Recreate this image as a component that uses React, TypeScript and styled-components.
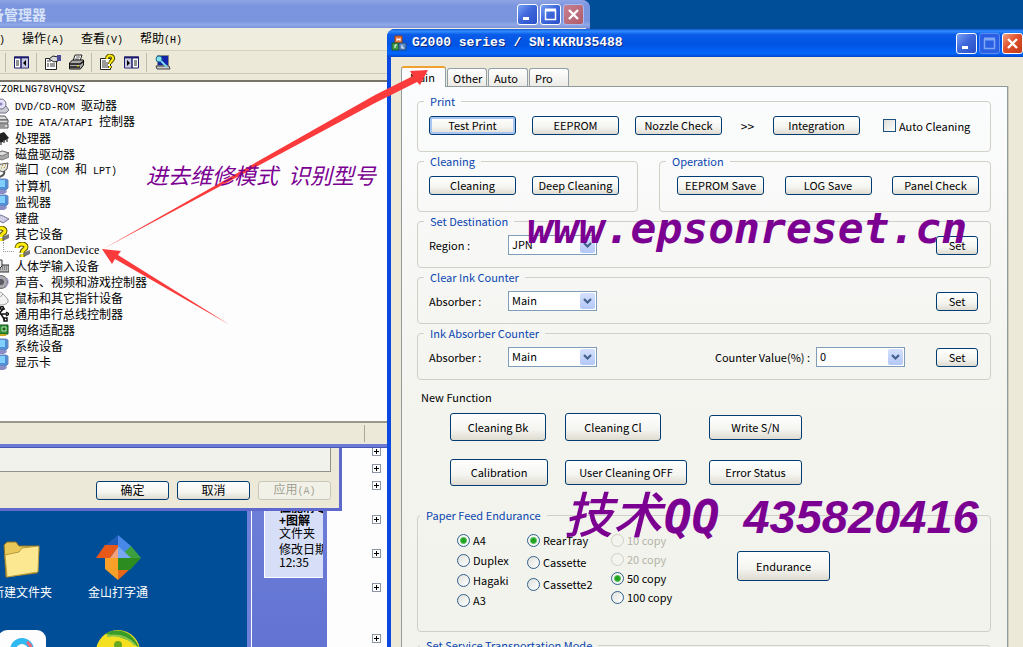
import React from "react";
import styled, { createGlobalStyle, css } from "styled-components";

const UI_FONT = '"Noto Sans CJK JP", "Noto Sans", sans-serif';
const SONG_FONT = '"Noto Sans CJK SC", "Liberation Sans", sans-serif';

const GlobalStyle = createGlobalStyle`
  * { box-sizing: border-box; }
  html, body { margin: 0; padding: 0; height: 100%; overflow: hidden; }
  #root { height: 100%; }
  body { font: 12px/14px ${SONG_FONT}; color: #000; }
  button, input, select { font: inherit; color: inherit; }
`;

/* ---------- desktop ---------- */

const Desktop = styled.main`
  position: relative;
  height: 100%;
  overflow: hidden;
  background: #004e98;
`;

const Shortcuts = styled.div`
  position: absolute;
  left: -26px;
  top: 535px;
  display: grid;
  grid-template-columns: 96px 96px;
  grid-auto-rows: 95px;
`;

const Shortcut = styled.a`
  display: flex;
  flex-direction: column;
  align-items: center;
  gap: 2px;
  color: #fff;
  text-decoration: none;
  white-space: nowrap;
  svg { display: block; }
`;

/* ---------- windows ---------- */

const Frame = styled.section`
  position: absolute;
  display: flex;
  flex-direction: column;
`;

const ManagerWindow = styled(Frame)`
  left: -60px;
  top: 0;
  width: 650px;
  height: 448px;
  padding: 0 4px 3px;
  background: #6a7ad6;
  border-bottom: 1px solid #4a56b4;
  border-radius: 0 8px 0 0;
`;

const ManagerBody = styled.div`
  display: flex;
  flex: 1;
  flex-direction: column;
  background: #ece9d8;
`;

const PropertiesWindow = styled(Frame)`
  left: -60px;
  top: 300px;
  width: 402px;
  height: 211px;
  border: 3px solid #5f68cc;
  background: #ece9d8;
`;

const ExplorerWindow = styled(Frame)`
  left: 247px;
  top: 300px;
  bottom: 0;
  width: 180px;
  flex-direction: row;
  background: #fdfdfd;
  border-left: 4px solid #6f80d8;
`;

const ToolWindow = styled(Frame)`
  left: 387px;
  right: -4px;
  top: 29px;
  padding: 0 4px 4px;
  background: #0a48e0;
  border-radius: 8px 0 0 0;
  font-family: ${UI_FONT};
  font-size: 11px;
`;

const TitleBar = styled.header<{ $active?: boolean }>`
  display: flex;
  align-items: center;
  gap: 2px;
  height: 28px;
  margin: 0 -4px;
  padding: 0 6px 0 4px;
  border-radius: inherit;
  color: #d6e2f8;
  background: linear-gradient(#8fa4e4, #7b95df 20%, #7a94de 75%, #8fa8e8 88%, #7e92da);
  ${(p) =>
    p.$active &&
    css`
      padding-right: 4px;
      color: #fff;
      background: linear-gradient(#1458d0, #2f8cff 8%, #0a5ce8 20%, #0054e3 55%, #0066fb 88%, #0344c8);
    `}
`;

const Title = styled.h1`
  flex: 1;
  margin: 0;
  font: bold 14px/16px ${SONG_FONT};
  white-space: nowrap;
`;

const ManagerTitle = styled(Title)`
  padding-left: 32px;
`;

const ToolTitle = styled(Title)`
  padding-left: 3px;
  font: bold 13px/16px "Liberation Mono", monospace;
  text-shadow: 1px 1px 0 #0a2a80;
`;

const CaptionButton = styled.button<{ $tone: "blue" | "dim" | "red" | "faded" }>`
  display: grid;
  place-items: center;
  width: 21px;
  height: 21px;
  padding: 0;
  border: 1px solid ${(p) => (p.$tone === "faded" ? "#a9bcf0" : "#fff")};
  border-radius: 3px;
  background: ${(p) =>
    p.$tone === "red"
      ? "linear-gradient(135deg, #f0a080, #e0502c 45%, #c03a18)"
      : p.$tone === "faded"
        ? "linear-gradient(135deg, #c88090, #b05a68)"
        : "linear-gradient(135deg, #7aa2f4, #3e68dc 45%, #2a50c8)"};
  ${(p) => p.$tone === "dim" && "border-color: #5c8cf0; background: #2a5fe4;"}
`;

type GlyphKind = "min" | "max" | "close";
const CaptionGlyph = ({ kind, color = "#fff" }: { kind: GlyphKind; color?: string }) => (
  <svg width="15" height="15" viewBox="0 0 15 15" fill="none" stroke={color}>
    {kind === "min" && <path d="M3 11.5h6" strokeWidth="3" />}
    {kind === "max" && <path d="M2.500 3v9.500h10V3M2 3h11" strokeWidth="1.500" />}
    {kind === "max" && <path d="M2 3h11" strokeWidth="3" />}
    {kind === "close" && <path d="M3 3l9 9M12 3l-9 9" strokeWidth="2.400" />}
  </svg>
);

/* ---------- mixed-script text ---------- */

const HalfWidth = styled.span`
  font-family: "Liberation Mono", monospace;
  font-size: 10px;
  white-space: pre;
`;

const Mixed = ({ children }: { children: string }) => (
  <>
    {children.split(/([\x20-\x7e]+)/).map((part, i) =>
      i % 2 ? <HalfWidth key={i}>{part}</HalfWidth> : part
    )}
  </>
);

/* ---------- device manager ---------- */

const MenuBar = styled.nav`
  display: flex;
  align-items: center;
  gap: 17px;
  height: 23px;
  padding-left: 19px;
  background: #efedde;
  border-bottom: 1px solid #d5d2c2;
`;

const MenuItem = styled.button`
  padding: 0;
  border: 0;
  background: none;
  white-space: nowrap;
`;

const ToolBar = styled.div`
  display: flex;
  align-items: center;
  height: 23px;
  padding-left: 61px;
  border-bottom: 1px solid #cdcaba;
`;

const ToolGroup = styled.div`
  display: flex;
  gap: 7px;
  padding: 1px 6px 1px 7px;
  border-left: 1px solid #c0bdae;
`;

const ToolButton = styled.button`
  width: 17px;
  height: 17px;
  padding: 0;
  border: 0;
  background: none;
  svg { display: block; }
`;

const TreePane = styled.div`
  flex: 1;
  margin-top: 6px;
  background: #fdfdfd;
  border-top: 2px solid #77756a;
  border-bottom: 2px solid #9a988c;
`;

const Tree = styled.ul`
  margin: 0;
  padding: 0;
  list-style: none;
`;

const TreeItem = styled.li<{ $level: number }>`
  display: flex;
  align-items: center;
  gap: 6px;
  height: 16px;
  padding-left: ${(p) => [51, 49, 59][p.$level]}px;
  white-space: nowrap;
  ${(p) =>
    p.$level === 2 &&
    css`
      gap: 4px;
      &::before {
        content: "";
        align-self: flex-start;
        width: 10px;
        height: 9px;
        margin-right: -4px;
        border: dotted #9a9a9a;
        border-width: 0 0 1px 1px;
      }
    `}
`;

const DeviceName = styled.span`
  font-family: "Liberation Serif", serif;
`;

const StatusBar = styled.footer`
  display: flex;
  height: 21px;
  padding: 2px 0;
`;

const StatusCell = styled.div`
  width: 421px;
  border-right: 1px solid #aaa798;
`;

type Device = "disc" | "ide" | "chip" | "disk" | "port" | "pc" | "keys" | "unknown" | "hid" | "sound" | "mouse" | "usb" | "net";

const DeviceIcon = ({ kind }: { kind: Device }) => (
  <svg width="16" height="16" viewBox="0 0 16 16">
    {kind === "disc" && (
      <g stroke="#73738c">
        <path d="M5 9l8-1 3 4-3 3H6z" fill="#c9c9d2" />
        <circle cx="8" cy="6" r="5" fill="#e4e2f4" />
        <circle cx="8" cy="6" r="1.500" fill="#8c84c8" stroke="none" />
      </g>
    )}
    {kind === "ide" && (
      <g stroke="#555" fill="#dcdcdc">
        <path d="M4 2h8l3 4H6z" />
        <path d="M4 6h11v3H4zM4 10h11v4H4z" />
        <path d="M6 12h6" />
      </g>
    )}
    {kind === "chip" && (
      <g>
        <path d="M3 5l8-3 5 6-8 5z" fill="#222" />
        <path d="M5 12v3M8 12v3M11 10v3M14 9v3M4 3v2" stroke="#555" strokeWidth="1.500" />
      </g>
    )}
    {kind === "disk" && (
      <g stroke="#777">
        <path d="M2 8l7-3 7 2v4l-7 3-7-3z" fill="#aaa" />
        <path d="M2 8l7-3 7 2-7 3z" fill="#ddd" />
      </g>
    )}
    {kind === "port" && (
      <g stroke="#555">
        <path d="M3 3l12-2-1 6-4 3-5-2z" fill="#e6e6dc" />
        <path d="M11 9c1 3-1 5-5 6" fill="none" strokeWidth="2" />
        <path d="M6 4h1M9 3.500h1M12 3h1M8 6h1M11 5.500h1" stroke="#b09420" />
      </g>
    )}
    {kind === "pc" && (
      <g>
        <path d="M5 1h8l2 1v8l-2 2H5z" fill="#4f8fd8" stroke="#6d86b8" />
        <path d="M6 2h6v7H6z" fill="#7fd0ff" />
        <path d="M7 12h6l1 2-3 2H6z" fill="#8c8cc4" />
      </g>
    )}
    {kind === "keys" && (
      <g>
        <path d="M1 8l7-3 8 4-6 4z" fill="#c4c2dc" stroke="#77759c" />
        <path d="M5 8l6 3M8 7l5 2" stroke="#fff" strokeDasharray="1 1" />
      </g>
    )}
    {kind === "unknown" && (
      <g fill="none">
        <path d="M9 11l7-3v4l-6 3z" fill="#777" />
        <path d="M3 6c0-5 9-5 9-1 0 3-4 2-4 6M8 12.500V15" stroke="#5e5a00" strokeWidth="5" />
        <path d="M3 6c0-5 9-5 9-1 0 3-4 2-4 6M8 12.500V15" stroke="#ffec10" strokeWidth="3" />
      </g>
    )}
    {kind === "hid" && (
      <g stroke="#333">
        <path d="M5 7h11v7H5z" fill="#b8b8b8" />
        <path d="M7 9h8M7 11h8" stroke="#555" strokeDasharray="1 1" />
        <path d="M2 2h7v6l-3 3H2z" fill="#eee" />
      </g>
    )}
    {kind === "sound" && (
      <g>
        <circle cx="8" cy="8" r="6.500" fill="#a8a8ae" stroke="#666" />
        <circle cx="8" cy="8" r="3" fill="#5c5c64" />
        <path d="M14 4c2 3 2 6-2 10" fill="none" stroke="#aaa4e0" />
      </g>
    )}
    {kind === "mouse" && (
      <g stroke="#999">
        <path d="M5 1c2 0 9 6 10 9s-3 5-7 5-5-4-5-6 0-8 2-8z" fill="#f2f2f2" />
        <path d="M3 8c4-1 6-2 7-4" fill="none" />
      </g>
    )}
    {kind === "usb" && (
      <g fill="none" stroke="#111" strokeWidth="1.500">
        <path d="M2 8h12M6 8l4-5h2M8 8l3 5h1M13 6l3 2-3 2" />
        <circle cx="9" cy="2" r="1.500" />
        <path d="M11 12h3v3h-3z" />
      </g>
    )}
    {kind === "net" && (
      <g>
        <path d="M2 3h13v9H2z" fill="#2f8f38" stroke="#145018" />
        <path d="M9 5h4v4H9z" stroke="#b6ecb0" fill="#1c5c20" />
        <path d="M5 13h8" stroke="#c8a820" strokeWidth="2" />
      </g>
    )}
  </svg>
);

const devices: { kind: Device; name: string; child?: boolean }[] = [
  { kind: "disc", name: "DVD/CD-ROM 驱动器" },
  { kind: "ide", name: "IDE ATA/ATAPI 控制器" },
  { kind: "chip", name: "处理器" },
  { kind: "disk", name: "磁盘驱动器" },
  { kind: "port", name: "端口 (COM 和 LPT)" },
  { kind: "pc", name: "计算机" },
  { kind: "pc", name: "监视器" },
  { kind: "keys", name: "键盘" },
  { kind: "unknown", name: "其它设备" },
  { kind: "unknown", name: "CanonDevice", child: true },
  { kind: "hid", name: "人体学输入设备" },
  { kind: "sound", name: "声音、视频和游戏控制器" },
  { kind: "mouse", name: "鼠标和其它指针设备" },
  { kind: "usb", name: "通用串行总线控制器" },
  { kind: "net", name: "网络适配器" },
  { kind: "pc", name: "系统设备" },
  { kind: "pc", name: "显示卡" },
];

const PaneIcon = ({ flip }: { flip?: boolean }) => (
  <svg width="17" height="17" viewBox="0 0 17 17">
    <g transform={flip ? "matrix(-1 0 0 1 17 0)" : undefined}>
      <path d="M1.500 3h14v11h-14z" fill="#fff" stroke="#1c1c6c" />
      <path d="M1 3.500h15" stroke="#1c1c6c" strokeWidth="2" />
      <path d="M8 5h7v8H8z" fill="#c8c8e0" />
      <path d="M8 4v10" stroke="#1c1c6c" strokeWidth="1.500" />
      <path d="M3 7h3M3 9h3M3 11h3" stroke="#222" />
      <path d="M13 6v6l-3-3z" fill="#000" />
    </g>
  </svg>
);

const SheetIcon = () => (
  <svg width="17" height="17" viewBox="0 0 17 17">
    <path d="M1.500 4.500h11v11h-11z" fill="#fff" stroke="#222" />
    <path d="M3 10h2M6 10h5M3 12h2M6 12h5M3 7h4" stroke="#333" />
    <path d="M5 5l4-3 5 1v4l-4 1z" fill="#d8d8d8" stroke="#222" />
    <path d="M13 1h4v6h-4z" fill="#4a4a98" />
  </svg>
);

const PrinterIcon = () => (
  <svg width="17" height="17" viewBox="0 0 17 17">
    <path d="M5 7l2-6h7l-2 6z" fill="#fff" stroke="#222" />
    <path d="M8 3h4M7 5h4" stroke="#666" />
    <path d="M1.500 9l3-3h11v5l-3 4h-11z" fill="#aaa" stroke="#111" />
    <path d="M1 10h11l4-3M2 13h10" stroke="#111" fill="none" strokeWidth="1.500" />
    <path d="M9 12h2" stroke="#e8d820" />
  </svg>
);

const HelpSheetIcon = () => (
  <svg width="17" height="17" viewBox="0 0 17 17">
    <path d="M1.500 4.500h10v11h-10z" fill="#fff" stroke="#222" />
    <path d="M3 7h4M3 9h6M3 11h6M3 13h6" stroke="#333" />
    <path d="M8 5c0-5 7-4 6 0-1 2-3 2-3 5M11 12v2" fill="none" stroke="#5a5600" strokeWidth="4" />
    <path d="M8 5c0-5 7-4 6 0-1 2-3 2-3 5M11 12v2" fill="none" stroke="#ffec10" strokeWidth="2" />
  </svg>
);

const ScanIcon = () => (
  <svg width="17" height="17" viewBox="0 0 17 17">
    <path d="M3.500 1.500h11v10h-11z" fill="#1424a8" stroke="#888" />
    <path d="M2 12h13l1 3H3z" fill="#c8c8c8" stroke="#444" />
    <circle cx="5" cy="5" r="3" fill="#88e0f0" stroke="#1a6a8a" />
    <path d="M7 7l6 6" stroke="#7adcf0" strokeWidth="2" />
  </svg>
);

/* ---------- property sheet ---------- */

const SheetBody = styled.div`
  flex: 1;
  margin-right: 8px;
  background: #f2f2ec;
  border: solid #91918a;
  border-width: 0 1px 1px 0;
`;

const SheetButtons = styled.div`
  display: flex;
  justify-content: flex-end;
  gap: 8px;
  padding: 9px 8px 8px;
`;

/* ---------- explorer ---------- */

const TaskPane = styled.aside`
  width: 76px;
  padding: 0 4px 0 12px;
  background: linear-gradient(#7a8ee0, #6273d2);
  border-left: 1px solid #fff;
`;

const DetailCard = styled.div`
  display: flex;
  flex-direction: column;
  justify-content: flex-end;
  height: 278px;
  padding: 0 0 9px 14px;
  overflow: hidden;
  white-space: nowrap;
  background: #d6dff7;
  border: solid #fff;
  border-width: 0 0 1px 1px;
`;

const DetailLine = styled.p<{ $bold?: boolean; $spaced?: boolean }>`
  margin: ${(p) => (p.$spaced ? "3px 0 0" : "0")};
  font-weight: ${(p) => (p.$bold ? "bold" : "normal")};
  line-height: 13px;
`;

const FolderTree = styled.div`
  display: flex;
  flex: 1;
  flex-direction: column;
  padding: 143px 0 0 45px;
`;

const ExpandRow = styled.div<{ $span: number }>`
  flex: none;
  display: flex;
  align-items: flex-start;
  height: ${(p) => p.$span * 17}px;
  padding-top: 4px;
`;

const Expander = styled.button`
  width: 9px;
  height: 9px;
  padding: 0;
  border: 1px solid #8a96a4;
  background: #fff linear-gradient(#000, #000) center / 5px 1px no-repeat;
  &::before {
    content: "";
    display: block;
    width: 1px;
    height: 5px;
    margin: 0 auto;
    background: #000;
  }
`;

/* ---------- controls ---------- */

const Button = styled.button<{ $w?: number; $h?: number; $focus?: boolean }>`
  flex: none;
  width: ${(p) => p.$w ?? 87}px;
  height: ${(p) => p.$h ?? 19}px;
  padding: 0 0 1px;
  border: 1px solid #003c74;
  border-radius: 3px;
  background: linear-gradient(#fff, #f4f4f0 60%, #dedbd0);
  box-shadow: ${(p) => (p.$focus ? "inset 0 0 0 2px #a9c5f2" : "none")};
  line-height: 14px;
  white-space: nowrap;
  &:disabled {
    border-color: #c9c7ba;
    background: #f2f1e8;
    color: #a1a192;
  }
`;

const Tabs = styled.div`
  display: flex;
  align-items: flex-end;
  gap: 1px;
  height: 29px;
`;

const Tab = styled.button<{ $selected?: boolean }>`
  width: 40px;
  height: 18px;
  padding: 0 0 0 5px;
  border: 1px solid #91a0a8;
  border-bottom: 0;
  border-radius: 3px 3px 0 0;
  background: linear-gradient(#fff, #ecebe6);
  text-align: left;
  ${(p) =>
    p.$selected &&
    css`
      width: 45px;
      height: 21px;
      margin-bottom: -1px;
      padding: 0 0 2px 8px;
      border-top: 2px solid #f0a030;
      background: #fcfcfe;
    `}
`;

const Client = styled.div`
  padding: 0 15px 0 10px;
  background: #ece9d8;
`;

const Panel = styled.div`
  display: flex;
  flex-direction: column;
  gap: 2px;
  padding: 7px 16px 40px 15px;
  border: 1px solid #919b9c;
  box-shadow: 1px 0 0 #cfccbc;
  background: linear-gradient(#fbfcfd, #f3f4ee 50%, #f1f2ec);
`;

const Group = styled.fieldset<{ $h: number; $grow?: boolean; $w?: number }>`
  min-width: 0;
  height: ${(p) => p.$h}px;
  margin: 0;
  padding: 0;
  border: 1px solid #cfd0c6;
  border-radius: 4px;
  ${(p) => p.$grow && "flex: 1;"}
  ${(p) => p.$w && `width: ${p.$w}px;`}
`;

const ServiceGroup = styled(Group)`
  margin-top: 4px;
`;

const Legend = styled.legend<{ $tight?: boolean }>`
  margin-left: ${(p) => (p.$tight ? 2 : 6)}px;
  padding: 0 6px;
  color: #0a46b0;
  line-height: 14px;
  white-space: nowrap;
`;

const Pair = styled.div`
  display: flex;
  gap: 21px;
`;

const ButtonRow = styled.div<{ $spread?: boolean }>`
  display: flex;
  align-items: center;
  gap: 16px;
  padding: 8px 11px 0;
  ${(p) => p.$spread && "justify-content: space-between; padding-left: 17px;"}
`;

const Chevrons = styled.span`
  width: 19px;
  font-size: 12px;
  text-align: center;
`;

const Check = styled.label`
  display: flex;
  align-items: center;
  gap: 3px;
  margin-left: 7px;
  white-space: nowrap;
`;

const CheckBox = styled.input`
  appearance: none;
  width: 13px;
  height: 13px;
  margin: 0;
  border: 1px solid #1c5180;
  background: linear-gradient(135deg, #dcdcd7, #fff);
`;

const FieldRow = styled.div`
  display: flex;
  align-items: center;
  padding: 7px 12px 0 11px;
`;

const FieldLabel = styled.label<{ $end?: boolean }>`
  width: 79px;
  white-space: nowrap;
  ${(p) => p.$end && "width: auto; margin: 0 6px 0 auto;"}
`;

const SelectBox = styled.span`
  display: grid;
  width: 89px;
  height: 20px;
  border: 1px solid #7f9db9;
  background: #fff;
`;

const Select = styled.select`
  appearance: none;
  grid-area: 1 / 1;
  width: 100%;
  padding: 0 18px 2px 3px;
  border: 0;
  background: none;
  line-height: 16px;
`;

const SelectArrow = styled.svg`
  grid-area: 1 / 1;
  place-self: center end;
  margin-right: 1px;
  border-radius: 2px;
  background: linear-gradient(#d4e0fc, #b4c8f6);
  pointer-events: none;
`;

const SetSlot = styled.div<{ $near?: boolean }>`
  margin-left: ${(p) => (p.$near ? "31px" : "auto")};
  line-height: 0;
`;

const FunctionArea = styled.section`
  height: 124px;
  padding: 8px 0 0 4px;
`;

const PlainHeading = styled.h2`
  margin: 0 0 9px;
  font: inherit;
`;

const FunctionGrid = styled.div`
  display: grid;
  grid-template-columns: 115px 144px auto;
  row-gap: 18px;
  align-items: center;
  padding-left: 29px;
`;

const EnduranceGrid = styled.div`
  display: grid;
  grid-template-columns: 70px 84px 126px auto;
  padding: 11px 0 0 39px;
`;

const RadioColumn = styled.div<{ $gap: number }>`
  display: flex;
  flex-direction: column;
  gap: ${(p) => p.$gap}px;
`;

const RadioLabel = styled.label<{ $disabled?: boolean }>`
  display: flex;
  align-items: center;
  gap: 3px;
  color: ${(p) => (p.$disabled ? "#b4b4a8" : "inherit")};
  white-space: nowrap;
`;

const Radio = styled.input`
  appearance: none;
  width: 13px;
  height: 13px;
  margin: 0;
  border: 1px solid #30608c;
  border-radius: 50%;
  background: linear-gradient(135deg, #e0e0dc, #fff);
  &:checked {
    background: radial-gradient(circle, #22a022 0 2px, #5cc45c 3px, #f4f6f2 4px);
  }
  &:disabled { border-color: #cfcfc4; background: #f4f4ee; }
`;

const RunSlot = styled.div`
  padding-top: 18px;
`;

const Combo = ({ id, value }: { id: string; value: string }) => (
  <SelectBox>
    <Select id={id} defaultValue={value}>
      <option>{value}</option>
    </Select>
    <SelectArrow width="15" height="16" viewBox="0 0 15 16">
      <path d="M4 6l3.500 3.500L11 6" fill="none" stroke="#44608c" strokeWidth="2.200" />
    </SelectArrow>
  </SelectBox>
);

const SettingGroup = ({ title, label, id, value, counter }: {
  title: string; label: string; id: string; value: string; counter?: boolean;
}) => (
  <Group $h={54}>
    <Legend>{title}</Legend>
    <FieldRow>
      <FieldLabel htmlFor={id}>{label}</FieldLabel>
      <Combo id={id} value={value} />
      {counter && (
        <>
          <FieldLabel $end htmlFor="counter-value">Counter Value(%) :</FieldLabel>
          <Combo id="counter-value" value="0" />
        </>
      )}
      <SetSlot $near={counter}>
        <Button $w={42}>Set</Button>
      </SetSlot>
    </FieldRow>
  </Group>
);

const Options = ({ name, items, selected, gap, disabled = [] }: {
  name: string; items: string[]; selected: string; gap: number; disabled?: string[];
}) => (
  <RadioColumn $gap={gap}>
    {items.map((item) => (
      <RadioLabel key={item} $disabled={disabled.includes(item)}>
        <Radio type="radio" name={name} defaultChecked={item === selected} disabled={disabled.includes(item)} />
        {item}
      </RadioLabel>
    ))}
  </RadioColumn>
);

/* ---------- annotations ---------- */

const Note = styled.div<{ $size: number }>`
  position: absolute;
  display: flex;
  align-items: baseline;
  color: #7b0092;
  font-style: italic;
  font-size: ${(p) => p.$size}px;
  line-height: ${(p) => p.$size}px;
  white-space: nowrap;
  pointer-events: none;
`;

const ModeNote = styled(Note)`
  left: 146px;
  top: 163px;
  gap: 10px;
`;

const UrlNote = styled(Note)`
  left: 527px;
  top: 207px;
  font-family: "DejaVu Sans Mono", monospace;
  font-weight: bold;
`;

const ContactNote = styled(Note)`
  left: 564px;
  top: 488px;
  gap: 2px;
  font-weight: bold;
`;

const NoteHan = styled.span`
  font-weight: 500;
  font-size: 49px;
`;

const NoteLetters = styled.span`
  font-family: "DejaVu Sans Mono", monospace;
  font-size: 46px;
`;

const NoteDigits = styled.span`
  margin-left: 22px;
  font-family: "Liberation Sans", sans-serif;
`;

const Arrows = styled.svg`
  position: absolute;
  left: 0;
  top: 0;
  pointer-events: none;
`;

export default function App() {
  return (
    <>
      <GlobalStyle />
      <Desktop>
        <Shortcuts>
          <Shortcut href="#folder">
            <svg width="48" height="48" viewBox="0 0 48 48">
              <path d="M6 10l3-3h9l3 4h18l2 3-2 24-31 4z" fill="#e8c858" stroke="#8a7020" />
              <path d="M7 20l14-3 3-4 17-2-1 26-31 5z" fill="#fbe890" stroke="#b89a3c" />
            </svg>
            新建文件夹
          </Shortcut>
          <Shortcut href="#typing">
            <svg width="48" height="48" viewBox="0 0 48 48">
              <path d="M24 0l13 11v12H24z" fill="#4888e8" />
              <path d="M24 0v11l-12-1z" fill="#1c5cb8" />
              <path d="M2 23L11 10h13v2l-8 11z" fill="#e85818" />
              <path d="M16 23l8-11v11z" fill="#f4a078" />
              <path d="M11 23h13v22L11 34z" fill="#f8a028" />
              <path d="M24 23h23L36 35H24z" fill="#2c8c20" />
              <path d="M37 11l10 12H24z" fill="#3ca040" />
              <path d="M24 11l13 12H24z" fill="#78a8f4" />
              <path d="M24 35h11L24 45z" fill="#e86818" />
            </svg>
            金山打字通
          </Shortcut>
          <Shortcut href="#cloud">
            <svg width="48" height="48" viewBox="0 0 48 48">
              <rect width="48" height="48" rx="9" fill="#fdfdfd" />
              <path d="M15 20a9 9 0 0 1 18 0" fill="none" stroke="#30b8f0" strokeWidth="6" />
              <path d="M29 12a9 9 0 0 1 4 8" fill="none" stroke="#f06878" strokeWidth="3" />
            </svg>
          </Shortcut>
          <Shortcut href="#guard">
            <svg width="48" height="48" viewBox="0 0 48 48">
              <circle cx="24" cy="22" r="22" fill="#f4e020" />
              <path d="M11 4C24-4 40 2 45 18 36 9 24 6 11 4z" fill="#3a9c28" />
              <path d="M13 6c12-2 22 2 28 9" fill="none" stroke="#8cc850" strokeWidth="2" />
              <circle cx="24" cy="15" r="4" fill="#6aa820" />
            </svg>
          </Shortcut>
        </Shortcuts>

        <ExplorerWindow>
          <TaskPane>
            <DetailCard>
              <DetailLine $bold>佳能清零</DetailLine>
              <DetailLine $bold>+图解</DetailLine>
              <DetailLine>文件夹</DetailLine>
              <DetailLine $spaced>修改日期:</DetailLine>
              <DetailLine>12:35</DetailLine>
            </DetailCard>
          </TaskPane>
          <FolderTree>
            {[1, 1, 2, 2, 2, 3, 1].map((span, i) => (
              <ExpandRow key={i} $span={span}>
                <Expander aria-label="Expand" />
              </ExpandRow>
            ))}
          </FolderTree>
        </ExplorerWindow>

        <PropertiesWindow>
          <SheetBody />
          <SheetButtons>
            <Button $w={73}>确定</Button>
            <Button $w={73}>取消</Button>
            <Button $w={73} disabled><Mixed>应用(A)</Mixed></Button>
          </SheetButtons>
        </PropertiesWindow>

        <ManagerWindow>
          <TitleBar>
            <ManagerTitle>设备管理器</ManagerTitle>
            <CaptionButton $tone="blue" aria-label="Minimize"><CaptionGlyph kind="min" /></CaptionButton>
            <CaptionButton $tone="blue" aria-label="Maximize"><CaptionGlyph kind="max" /></CaptionButton>
            <CaptionButton $tone="faded" aria-label="Close"><CaptionGlyph kind="close" /></CaptionButton>
          </TitleBar>
          <ManagerBody>
            <MenuBar>
              {["文件(F)", "操作(A)", "查看(V)", "帮助(H)"].map((m) => (
                <MenuItem key={m}><Mixed>{m}</Mixed></MenuItem>
              ))}
            </MenuBar>
            <ToolBar>
              <ToolGroup>
                <ToolButton aria-label="Show tree"><PaneIcon /></ToolButton>
              </ToolGroup>
              <ToolGroup>
                <ToolButton aria-label="Properties"><SheetIcon /></ToolButton>
                <ToolButton aria-label="Print"><PrinterIcon /></ToolButton>
              </ToolGroup>
              <ToolGroup>
                <ToolButton aria-label="Help"><HelpSheetIcon /></ToolButton>
                <ToolButton aria-label="Action pane"><PaneIcon flip /></ToolButton>
              </ToolGroup>
              <ToolGroup>
                <ToolButton aria-label="Scan"><ScanIcon /></ToolButton>
              </ToolGroup>
            </ToolBar>
            <TreePane>
              <Tree>
                <TreeItem $level={0}><Mixed>TZORLNG78VHQVSZ</Mixed></TreeItem>
                {devices.map((d) => (
                  <TreeItem key={d.name} $level={d.child ? 2 : 1}>
                    <DeviceIcon kind={d.kind} />
                    {d.child ? <DeviceName>{d.name}</DeviceName> : <span><Mixed>{d.name}</Mixed></span>}
                  </TreeItem>
                ))}
              </Tree>
            </TreePane>
            <StatusBar><StatusCell /></StatusBar>
          </ManagerBody>
        </ManagerWindow>

        <ToolWindow>
          <TitleBar $active>
            <svg width="16" height="16" viewBox="0 0 16 16">
              <path d="M4 1h7v7H4z" fill="#e87840" stroke="#a04010" />
              <path d="M1 8h7v7H1z" fill="#3c9c48" stroke="#1c5c24" />
              <path d="M8 8h7v7H8z" fill="#5c8cc8" stroke="#24487c" />
              <path d="M6 3v3M9 3v3M6 4.500h3M4 13v-3h2M11 10v3h2" stroke="#fff" fill="none" />
            </svg>
            <ToolTitle>G2000 series / SN:KKRU35488</ToolTitle>
            <CaptionButton $tone="blue" aria-label="Minimize"><CaptionGlyph kind="min" /></CaptionButton>
            <CaptionButton $tone="dim" aria-label="Maximize"><CaptionGlyph kind="max" color="#7ea6f4" /></CaptionButton>
            <CaptionButton $tone="red" aria-label="Close"><CaptionGlyph kind="close" /></CaptionButton>
          </TitleBar>
          <Client>
            <Tabs role="tablist">
              <Tab role="tab" aria-selected $selected>Main</Tab>
              <Tab role="tab">Other</Tab>
              <Tab role="tab">Auto</Tab>
              <Tab role="tab">Pro</Tab>
            </Tabs>
            <Panel role="tabpanel">
              <Group $h={58}>
                <Legend>Print</Legend>
                <ButtonRow>
                  <Button $focus>Test Print</Button>
                  <Button>EEPROM</Button>
                  <Button>Nozzle Check</Button>
                  <Chevrons>&gt;&gt;</Chevrons>
                  <Button>Integration</Button>
                  <Check><CheckBox type="checkbox" />Auto Cleaning</Check>
                </ButtonRow>
              </Group>
              <Pair>
                <Group $h={58} $w={221}>
                  <Legend>Cleaning</Legend>
                  <ButtonRow>
                    <Button>Cleaning</Button>
                    <Button>Deep Cleaning</Button>
                  </ButtonRow>
                </Group>
                <Group $h={58} $grow>
                  <Legend>Operation</Legend>
                  <ButtonRow $spread>
                    <Button>EEPROM Save</Button>
                    <Button>LOG Save</Button>
                    <Button>Panel Check</Button>
                  </ButtonRow>
                </Group>
              </Pair>
              <SettingGroup title="Set Destination" label="Region :" id="region" value="JPN" />
              <SettingGroup title="Clear Ink Counter" label="Absorber :" id="clear-absorber" value="Main" />
              <SettingGroup title="Ink Absorber Counter" label="Absorber :" id="ink-absorber" value="Main" counter />
              <FunctionArea>
                <PlainHeading>New Function</PlainHeading>
                <FunctionGrid>
                  <Button $w={96} $h={28}>Cleaning Bk</Button>
                  <Button $w={96} $h={28}>Cleaning Cl</Button>
                  <Button $w={93} $h={25}>Write S/N</Button>
                  <Button $w={98} $h={27}>Calibration</Button>
                  <Button $w={122} $h={25}>User Cleaning OFF</Button>
                  <Button $w={93} $h={25}>Error Status</Button>
                </FunctionGrid>
              </FunctionArea>
              <Group $h={124}>
                <Legend $tight>Paper Feed Endurance</Legend>
                <EnduranceGrid>
                  <Options name="paper" items={["A4", "Duplex", "Hagaki", "A3"]} selected="A4" gap={6} />
                  <Options name="source" items={["RearTray", "Cassette", "Cassette2"]} selected="RearTray" gap={8} />
                  <Options
                    name="copies"
                    items={["10 copy", "20 copy", "50 copy", "100 copy"]}
                    selected="50 copy"
                    disabled={["10 copy", "20 copy"]}
                    gap={5}
                  />
                  <RunSlot><Button $w={93} $h={30}>Endurance</Button></RunSlot>
                </EnduranceGrid>
              </Group>
              <ServiceGroup $h={60}>
                <Legend $tight>Set Service Transportation Mode</Legend>
              </ServiceGroup>
            </Panel>
          </Client>
        </ToolWindow>

        <Arrows width="460" height="340" viewBox="0 0 460 340" fill="#fb3b3b">
          <path d="M428 70L410 71L413 76L375 95L103 249L375 103L417 82L420 85Z" />
          <path d="M102 249L121 251L118 255L230 325L115 259L112 264Z" />
        </Arrows>
        <ModeNote $size={22}>
          <span>进去维修模式</span>
          <span>识别型号</span>
        </ModeNote>
        <UrlNote $size={43}>www.epsonreset.cn</UrlNote>
        <ContactNote $size={47}>
          <NoteHan>技术</NoteHan>
          <NoteLetters>QQ</NoteLetters>
          <NoteDigits>435820416</NoteDigits>
        </ContactNote>
      </Desktop>
    </>
  );
}
